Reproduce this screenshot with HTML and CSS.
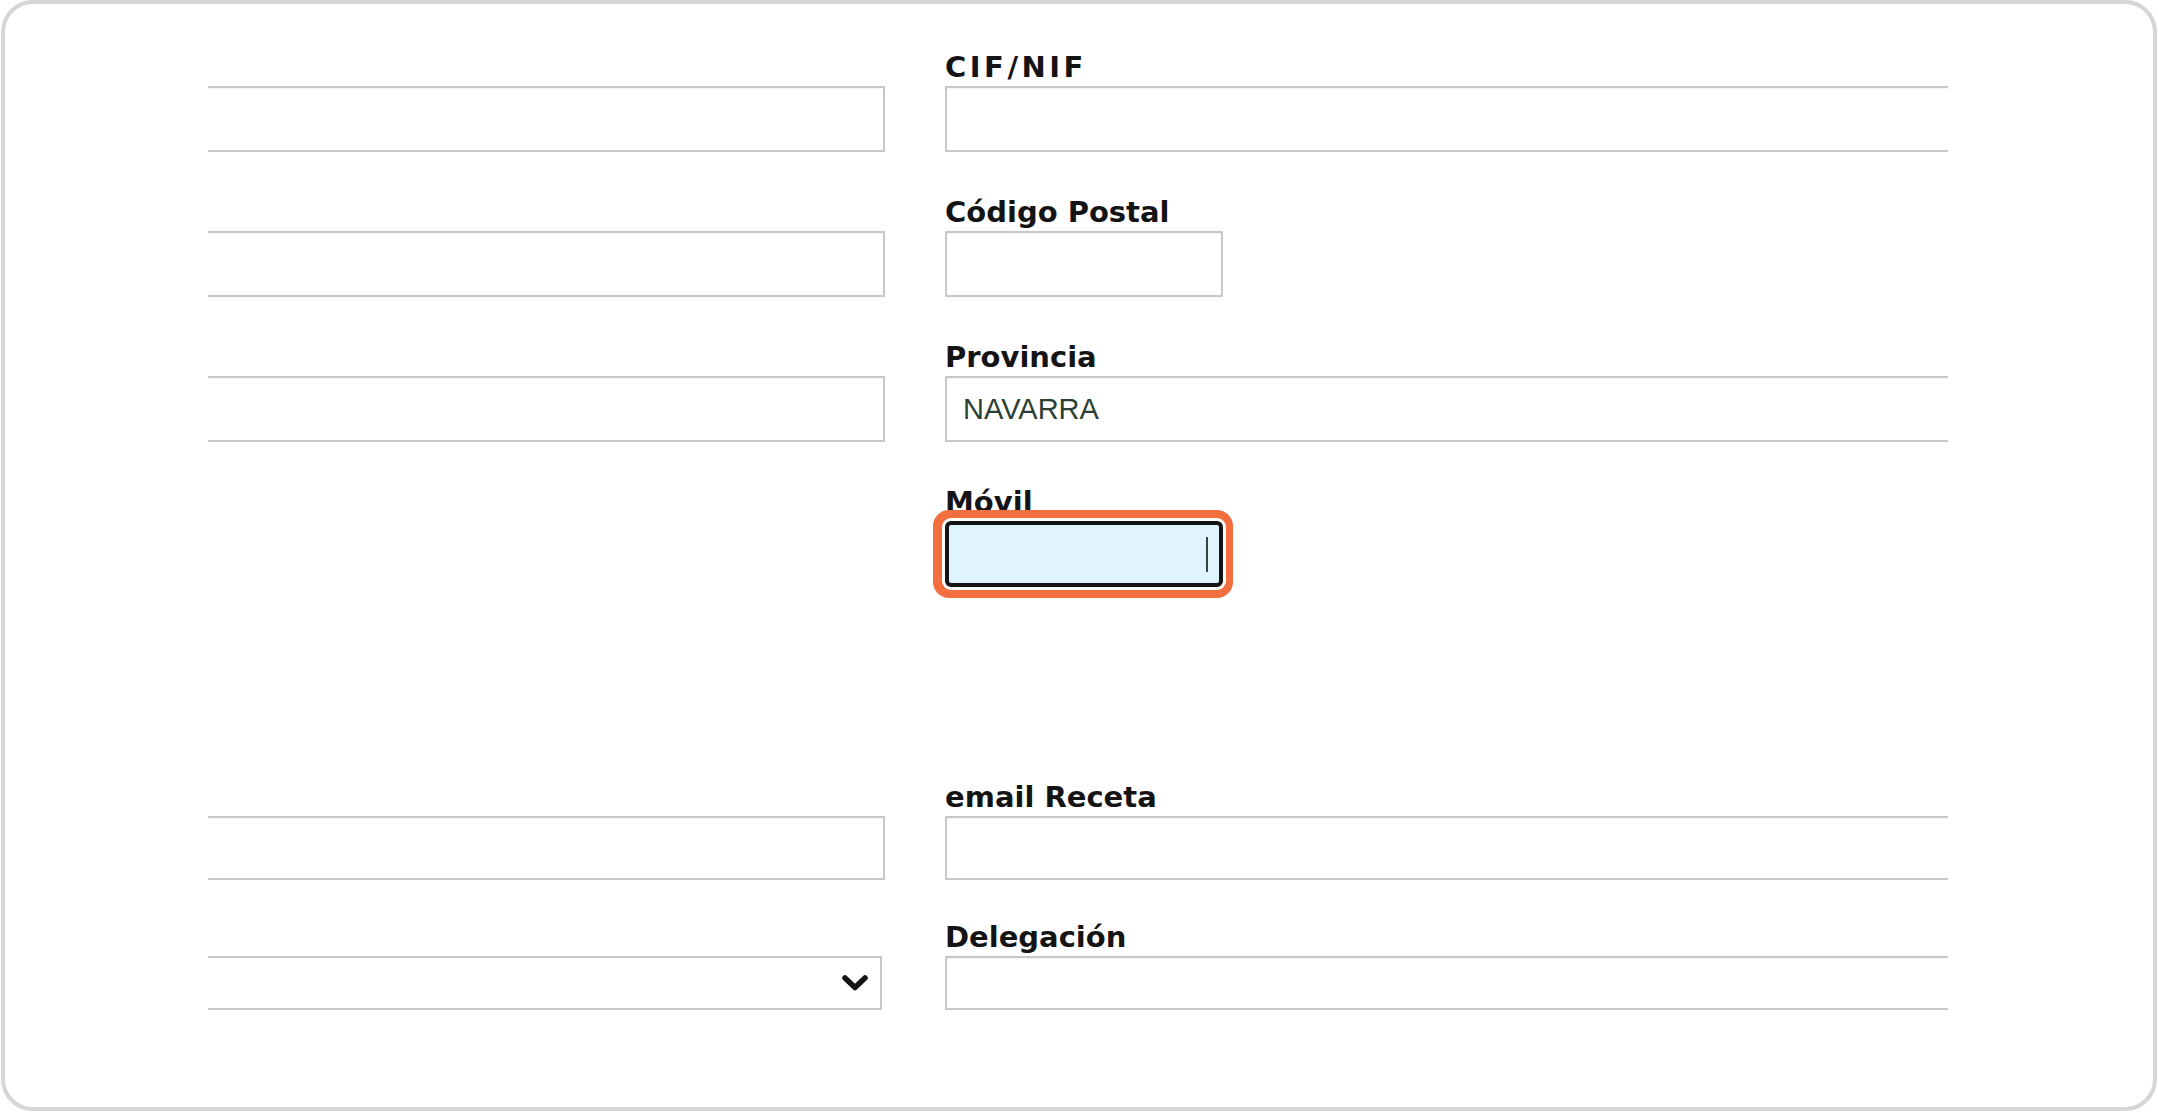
FILE: index.html
```html
<!DOCTYPE html>
<html lang="es">
<head>
<meta charset="utf-8">
<title>Datos del cliente</title>
<link rel="stylesheet" href="styles.css">
</head>
<body>
<div class="frame">
  <div class="viewport">
    <div class="form">
      <div class="row">
        <div class="field"><span class="label"></span><input class="input" type="text"></div>
        <div class="field"><label class="label label--spaced">CIF/NIF</label><input class="input" type="text"></div>
      </div>
      <div class="row">
        <div class="field"><span class="label"></span><input class="input" type="text"></div>
        <div class="field"><label class="label">Código Postal</label><input class="input input--short" type="text"></div>
      </div>
      <div class="row">
        <div class="field"><span class="label"></span><input class="input" type="text"></div>
        <div class="field"><label class="label">Provincia</label><input class="input" type="text" value="NAVARRA"></div>
      </div>
      <div class="row">
        <div class="field"></div>
        <div class="field field--focus">
          <label class="label">Móvil</label>
          <div class="input input--short input--focus"><span class="caret"></span></div>
        </div>
      </div>
      <div class="row row--after-gap">
        <div class="field"><span class="label"></span><input class="input input--mid" type="text"></div>
        <div class="field"><label class="label">email Receta</label><input class="input input--mid" type="text"></div>
      </div>
      <div class="row row--tight">
        <div class="field">
          <span class="label"></span>
          <div class="select">
            <svg class="chevron" width="26" height="16" viewBox="0 0 26 16" aria-hidden="true"><polyline points="3,3 13,12.5 23,3" fill="none" stroke="#141414" stroke-width="5.5" stroke-linecap="round" stroke-linejoin="round"/></svg>
          </div>
        </div>
        <div class="field"><label class="label">Delegación</label><input class="input input--low" type="text"></div>
      </div>
    </div>
  </div>
</div>
</body>
</html>
```

FILE: styles.css
```css
* { box-sizing: border-box; }

html, body {
  margin: 0;
  padding: 0;
  background: #ffffff;
}

.frame {
  margin: 0 1px 0 1px;
  width: 2156px;
  height: 1111px;
  border: 4px solid #d6d6d8;
  border-radius: 32px;
  background: #ffffff;
  padding-top: 46px;
}

.viewport {
  margin-left: 203px;
  width: 1740px;
  overflow: hidden;
  padding: 12px 0;
  margin-top: -12px;
}

.form {
  display: flex;
  flex-direction: column;
  gap: 43px;
  margin-left: -30px;
}

.row {
  display: grid;
  grid-template-columns: 707px 1040px;
  column-gap: 60px;
}

.row--after-gap { margin-top: 150px; }
.row--tight { margin-top: -3px; }

.field {
  display: flex;
  flex-direction: column;
}

.label {
  display: block;
  height: 34px;
  margin-bottom: 2px;
  font-family: "DejaVu Sans", Verdana, sans-serif;
  font-weight: 700;
  font-size: 29px;
  line-height: 34px;
  color: #141414;
  white-space: nowrap;
}

.label--spaced { letter-spacing: 3.5px; }

.input {
  display: block;
  width: 100%;
  height: 66px;
  margin: 0;
  border: 2px solid #c8c8c8;
  border-radius: 0;
  background: #ffffff;
  box-shadow: inset 0 1px 1px rgba(0, 0, 0, 0.05);
  padding: 0 16px;
  font-family: "Liberation Sans", Arial, sans-serif;
  font-size: 29px;
  color: #2b3f33;
  outline: none;
}

.input--short { width: 278px; }
.input--mid { height: 64px; }
.input--low { height: 54px; }

.input--focus {
  position: relative;
  display: flex;
  align-items: center;
  justify-content: flex-end;
  padding: 0 11px 0 0;
  background: #dff4fd;
  border: 4px solid #141414;
  border-radius: 6px;
  box-shadow: 0 0 0 3px #ffffff, -1px 0 0 11px #f36f3f;
}

.caret {
  display: block;
  width: 2px;
  height: 35px;
  background: #2f4a3c;
}

.select {
  display: flex;
  align-items: center;
  justify-content: flex-end;
  width: 704px;
  height: 54px;
  border: 2px solid #c8c8c8;
  background: #ffffff;
  padding-right: 12px;
}

.chevron { display: block; }
```
